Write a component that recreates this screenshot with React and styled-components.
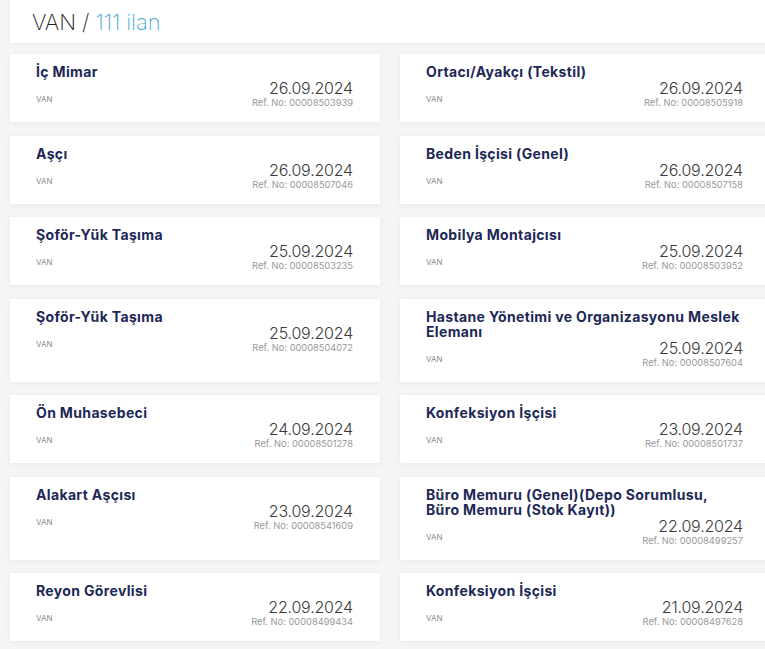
import React from 'react';
import styled, { createGlobalStyle } from 'styled-components';

const GlobalStyle = createGlobalStyle`
  html, body {
    margin: 0;
    padding: 0;
    background: #f5f5f5;
    overflow-x: hidden;
  }
  body {
    font-family: Inter, "Noto Sans", sans-serif;
  }
`;

const jobs = [
  { title: 'İç Mimar', date: '26.09.2024', ref: '00008503939' },
  { title: 'Ortacı/Ayakçı (Tekstil)', date: '26.09.2024', ref: '00008505918' },
  { title: 'Aşçı', date: '26.09.2024', ref: '00008507046' },
  { title: 'Beden İşçisi (Genel)', date: '26.09.2024', ref: '00008507158' },
  { title: 'Şoför-Yük Taşıma', date: '25.09.2024', ref: '00008503235' },
  { title: 'Mobilya Montajcısı', date: '25.09.2024', ref: '00008503952' },
  { title: 'Şoför-Yük Taşıma', date: '25.09.2024', ref: '00008504072' },
  { title: 'Hastane Yönetimi ve Organizasyonu Meslek Elemanı', date: '25.09.2024', ref: '00008507604' },
  { title: 'Ön Muhasebeci', date: '24.09.2024', ref: '00008501278' },
  { title: 'Konfeksiyon İşçisi', date: '23.09.2024', ref: '00008501737' },
  { title: 'Alakart Aşçısı', date: '23.09.2024', ref: '00008541609' },
  { title: 'Büro Memuru (Genel)(Depo Sorumlusu, Büro Memuru (Stok Kayıt))', date: '22.09.2024', ref: '00008499257' },
  { title: 'Reyon Görevlisi', date: '22.09.2024', ref: '00008499434' },
  { title: 'Konfeksiyon İşçisi', date: '21.09.2024', ref: '00008497628' },
];

const S = {};

S.page = styled.div`
  width: 760px;
  padding: 0 0 20px 10px;
`;

S.header = styled.div`
  height: 43px;
  background: #fff;
  box-shadow: 0 1px 5px rgba(0, 0, 0, 0.05);
  display: flex;
  align-items: center;
  padding-left: 22px;
  margin-bottom: 11px;
  font-size: 22px;
  font-weight: 200;
  color: #222;
  letter-spacing: -0.1px;
`;

S.count = styled.span`
  color: #4aa8d8;
`;

S.grid = styled.div`
  display: grid;
  grid-template-columns: 370px 370px;
  column-gap: 20px;
  row-gap: 13.5px;
`;

S.card = styled.div`
  background: #fff;
  box-shadow: 0 1px 6px rgba(0, 0, 0, 0.06);
  padding: 10px 27px 13px 26px;
`;

S.title = styled.div`
  font-size: 14px;
  line-height: 15px;
  font-weight: 700;
  letter-spacing: 0.35px;
  color: #1d2856;
`;

S.row = styled.div`
  display: flex;
  justify-content: space-between;
  align-items: flex-end;
  margin-top: 1px;
`;

S.city = styled.div`
  font-size: 8px;
  line-height: 10px;
  color: #8a8a8a;
  margin-bottom: 5px;
`;

S.meta = styled.div`
  text-align: right;
`;

S.date = styled.div`
  font-size: 16px;
  line-height: 17px;
  font-weight: 300;
  color: #3a3a3a;
  letter-spacing: -0.2px;
`;

S.ref = styled.div`
  font-size: 9.3px;
  line-height: 12px;
  color: #999;
`;

const JobCard = ({ title, date, refNo }) => (
  <S.card>
    <S.title>{title}</S.title>
    <S.row>
      <S.city>VAN</S.city>
      <S.meta>
        <S.date>{date}</S.date>
        <S.ref>Ref. No: {refNo}</S.ref>
      </S.meta>
    </S.row>
  </S.card>
);

export default function App() {
  return (
    <>
      <GlobalStyle />
      <S.page>
        <S.header>
          VAN /&nbsp;<S.count>111 ilan</S.count>
        </S.header>
        <S.grid>
          {jobs.map((job, i) => (
            <JobCard key={i} title={job.title} date={job.date} refNo={job.ref} />
          ))}
        </S.grid>
      </S.page>
    </>
  );
}
